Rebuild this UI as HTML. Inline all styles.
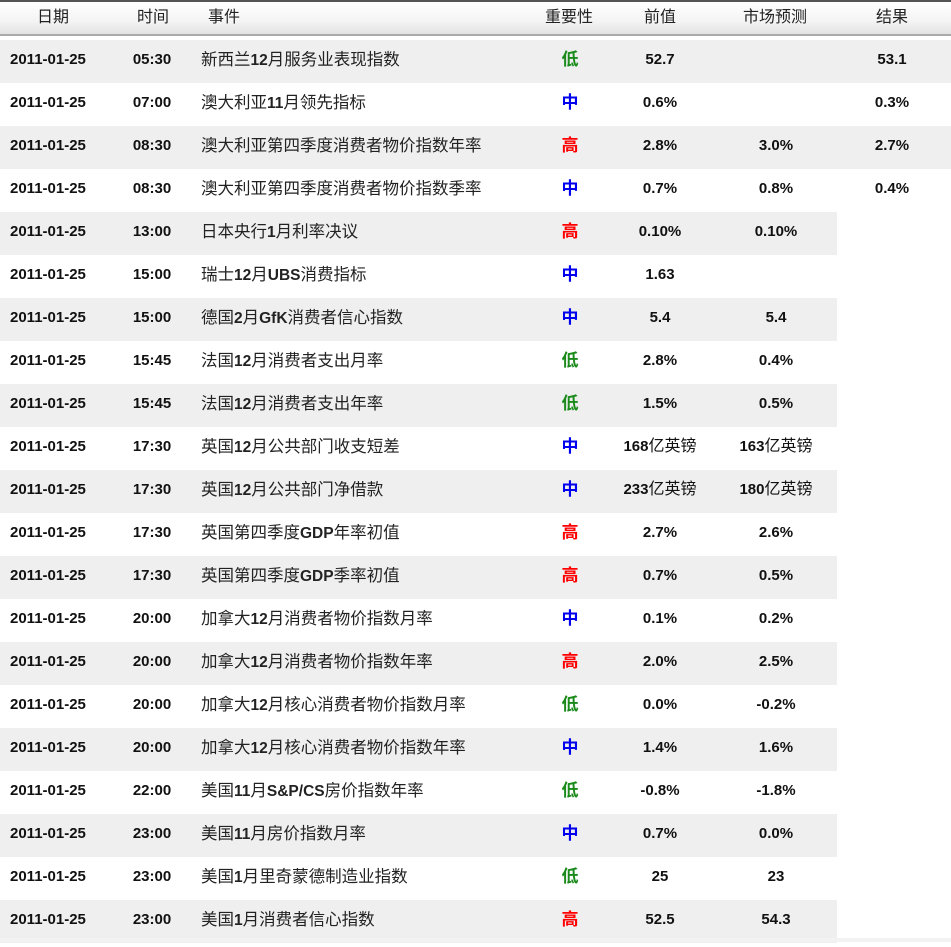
<!DOCTYPE html>
<html><head><meta charset="utf-8"><style>
body{margin:0;width:951px;height:947px;background:#fff;font-family:"Liberation Sans","Noto Sans CJK SC",sans-serif;overflow:hidden;position:relative}
.hd{position:absolute;left:0;top:0;width:951px;height:36px;border-top:2px solid #555;border-bottom:2px solid #aaa;box-sizing:border-box;background:linear-gradient(#fff,#f4f4f4 60%,#e2e2e2)}
.r{position:absolute;left:0;height:43px;width:951px}
.r.g{background:#efefef}
.r.s{width:837px}
.c{position:absolute;top:0;line-height:39px;font-size:15px;color:#111;white-space:nowrap}
.ev{font-size:16.5px;color:#222;line-height:40px}
.ev b{font-weight:bold;font-size:15.5px}
.n{font-weight:bold;font-size:15px}
.h{line-height:32px;color:#222;font-size:16px}
.lo,.mi,.hi{font-size:17px;font-weight:bold}
.lo{color:#1a8a1a}.mi{color:#0000ee}.hi{color:#f00}
</style></head><body>
<div class="hd">
<div class="c h" style="left:37px">日期</div>
<div class="c h" style="left:137px">时间</div>
<div class="c h" style="left:208px">事件</div>
<div class="c h" style="left:545px">重要性</div>
<div class="c h" style="left:644px">前值</div>
<div class="c h" style="left:743px">市场预测</div>
<div class="c h" style="left:876px">结果</div>
</div>
<div id="rows"></div>
<div style="position:absolute;left:0;top:938px;width:951px;height:4px;background:#f2f2f2"></div>
<script>
var d=[
["05:30","新西兰12月服务业表现指数","lo","52.7","","53.1"],
["07:00","澳大利亚11月领先指标","mi","0.6%","","0.3%"],
["08:30","澳大利亚第四季度消费者物价指数年率","hi","2.8%","3.0%","2.7%"],
["08:30","澳大利亚第四季度消费者物价指数季率","mi","0.7%","0.8%","0.4%"],
["13:00","日本央行1月利率决议","hi","0.10%","0.10%"],
["15:00","瑞士12月UBS消费指标","mi","1.63",""],
["15:00","德国2月GfK消费者信心指数","mi","5.4","5.4"],
["15:45","法国12月消费者支出月率","lo","2.8%","0.4%"],
["15:45","法国12月消费者支出年率","lo","1.5%","0.5%"],
["17:30","英国12月公共部门收支短差","mi","168亿英镑","163亿英镑"],
["17:30","英国12月公共部门净借款","mi","233亿英镑","180亿英镑"],
["17:30","英国第四季度GDP年率初值","hi","2.7%","2.6%"],
["17:30","英国第四季度GDP季率初值","hi","0.7%","0.5%"],
["20:00","加拿大12月消费者物价指数月率","mi","0.1%","0.2%"],
["20:00","加拿大12月消费者物价指数年率","hi","2.0%","2.5%"],
["20:00","加拿大12月核心消费者物价指数月率","lo","0.0%","-0.2%"],
["20:00","加拿大12月核心消费者物价指数年率","mi","1.4%","1.6%"],
["22:00","美国11月S&amp;P/CS房价指数年率","lo","-0.8%","-1.8%"],
["23:00","美国11月房价指数月率","mi","0.7%","0.0%"],
["23:00","美国1月里奇蒙德制造业指数","lo","25","23"],
["23:00","美国1月消费者信心指数","hi","52.5","54.3"]];
var t={lo:"低",mi:"中",hi:"高"},h="";
function ctr(x,txt,cls){return '<div class="c '+cls+'" style="left:'+(x-100)+'px;width:200px;text-align:center">'+txt.replace(/亿英镑/,'<span style="font-weight:normal;font-size:16px">亿英镑</span>')+'</div>';}
d.forEach(function(r,i){
 h+='<div class="r'+(i%2==0?' g':'')+(i>=4?' s':'')+'" style="top:'+(40+i*43)+'px">';
 h+='<div class="c n" style="left:10px">2011-01-25</div>';
 h+=ctr(152,r[0],'n');
 h+='<div class="c ev" style="left:201px">'+r[1].replace(/([0-9A-Za-z&;\/]+)/g,'<b>$1</b>')+'</div>';
 h+=ctr(570,t[r[2]],r[2]);
 h+=ctr(660,r[3],'n');
 h+=ctr(776,r[4],'n');
 if(r.length>5)h+=ctr(892,r[5],'n');
 h+='</div>';
});
document.getElementById('rows').innerHTML=h;
</script>
</body></html>
